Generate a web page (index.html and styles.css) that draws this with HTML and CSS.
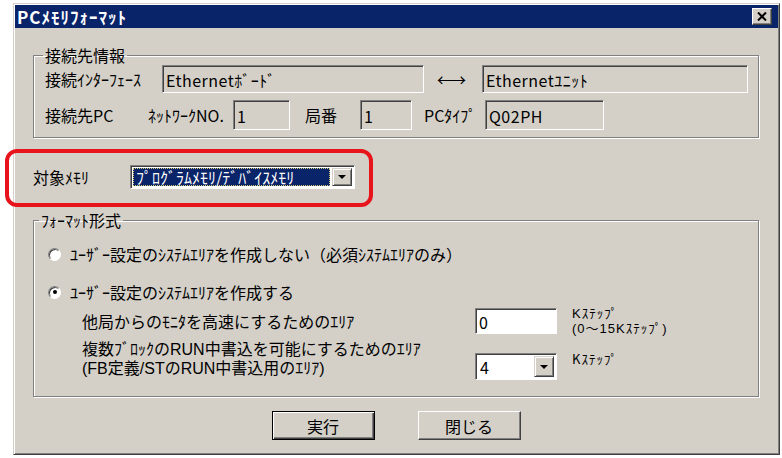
FILE: index.html
```html
<!DOCTYPE html>
<html>
  <head>
    <title>PCメモリフォーマット</title>
    <link rel="stylesheet" href="styles.css">
  </head>
  <body>
    <div class="window">
      <div class="title-bar">
        <span class="title">PCﾒﾓﾘﾌｫｰﾏｯﾄ</span>
        <button class="close-button">
          <svg width="10" height="9" viewBox="0 0 10 9"><path d="M1 0.5 L9 8.5 M9 0.5 L1 8.5" stroke="#000" stroke-width="2"/></svg>
        </button>
      </div>

      <div class="content">
        <fieldset class="group group-connection">
          <legend>接続先情報</legend>
          <div class="row row-interface">
            <span class="label label-interface">接続ｲﾝﾀｰﾌｪｰｽ</span>
            <span class="field field-board">Ethernetﾎﾞｰﾄﾞ</span>
            <span class="arrow">←→</span>
            <span class="field field-unit">Ethernetﾕﾆｯﾄ</span>
          </div>
          <div class="row row-pc">
            <span class="label label-pc">接続先PC</span>
            <span class="label label-network">ﾈｯﾄﾜｰｸNO.</span>
            <span class="field field-network">1</span>
            <span class="label label-station">局番</span>
            <span class="field field-station">1</span>
            <span class="label label-type">PCﾀｲﾌﾟ</span>
            <span class="field field-type">Q02PH</span>
          </div>
        </fieldset>

        <div class="target-row">
          <span class="label label-target">対象ﾒﾓﾘ</span>
          <div class="combo combo-target">
            <span class="combo-value selected">ﾌﾟﾛｸﾞﾗﾑﾒﾓﾘ/ﾃﾞﾊﾞｲｽﾒﾓﾘ</span>
            <span class="combo-button"><span class="down-arrow"></span></span>
          </div>
        </div>

        <fieldset class="group group-format">
          <legend>ﾌｫｰﾏｯﾄ形式</legend>
          <div class="radio-row radio-first">
            <span class="radio"></span>
            <span>ﾕｰｻﾞｰ設定のｼｽﾃﾑｴﾘｱを作成しない（必須ｼｽﾃﾑｴﾘｱのみ）</span>
          </div>
          <div class="radio-row radio-second">
            <span class="radio checked"></span>
            <span>ﾕｰｻﾞｰ設定のｼｽﾃﾑｴﾘｱを作成する</span>
          </div>
          <div class="area-row area-monitor">
            <span class="area-label">他局からのﾓﾆﾀを高速にするためのｴﾘｱ</span>
            <span class="field field-white">0</span>
            <span class="unit">
              <span class="unit-line">Kｽﾃｯﾌﾟ</span>
              <span class="unit-line">(0～15Kｽﾃｯﾌﾟ)</span>
            </span>
          </div>
          <div class="area-row area-run">
            <span class="area-label">
              <span class="label-line">複数ﾌﾞﾛｯｸのRUN中書込を可能にするためのｴﾘｱ</span>
              <span class="label-line">(FB定義/STのRUN中書込用のｴﾘｱ)</span>
            </span>
            <div class="combo combo-steps">
              <span class="combo-value">4</span>
              <span class="combo-button"><span class="down-arrow"></span></span>
            </div>
            <span class="unit unit-single">Kｽﾃｯﾌﾟ</span>
          </div>
        </fieldset>

        <div class="buttons">
          <button class="push-button default">実行</button>
          <button class="push-button">閉じる</button>
        </div>
      </div>
    </div>

    <div class="highlight-box"></div>
  </body>
</html>
```

FILE: styles.css
```css
body {
    margin: 0;
    padding: 3px 2px 0 13px;
    background-color: white;
    font-family: "Noto Sans CJK JP", "Noto Sans", sans-serif;
    font-size: 16px;
    color: black;
}

.window {
    width: 767px;
    height: 452px;
    box-sizing: border-box;
    padding: 1px;
    border: 1px solid;
    border-color: #d4d0c8 #404040 #404040 #d4d0c8;
    box-shadow: inset 1px 1px 0 #ffffff, inset -1px -1px 0 #808080;
    background-color: #d4d0c8;
}

.title-bar {
    height: 23px;
    background-color: #0a246a;
    display: flex;
    align-items: center;
    justify-content: space-between;
    padding: 0 6px 0 2px;
}

.title {
    color: white;
    font-weight: bold;
    font-size: 17px;
    line-height: 20px;
    letter-spacing: 1px;
}

.close-button {
    width: 20px;
    height: 17px;
    padding: 0;
    display: flex;
    align-items: center;
    justify-content: center;
    background-color: #d4d0c8;
    border: 1px solid;
    border-color: #ffffff #404040 #404040 #ffffff;
    box-shadow: inset -1px -1px 0 #808080;
}

.content {
    padding: 17px 19px 0 18px;
}

/* etched group boxes */
.group {
    margin: 0;
    border: 1px solid #808080;
    box-shadow: 1px 1px 0 #ffffff, inset 1px 1px 0 #ffffff;
}

.group legend {
    padding: 0 2px;
    line-height: 20px;
}

.group-connection {
    padding: 0 10px 7px 11px;
}

.group-connection legend {
    margin-left: -2px;
}

.row {
    display: flex;
    align-items: center;
}

.row-interface {
    height: 28px;
}

.row-pc {
    height: 30px;
    margin-top: 7px;
}

.label {
    line-height: 20px;
    white-space: nowrap;
}

.label-interface { width: 117px; }
.label-pc { width: 103px; }
.label-network { width: 85px; }
.label-station { width: 55px; margin-left: 15px; }
.label-type { width: 61px; margin-left: 12px; }
.label-target { width: 97px; }

/* sunken text boxes */
.field {
    box-sizing: border-box;
    height: 100%;
    display: flex;
    align-items: center;
    padding: 2px 3px 0;
    border: 1px solid;
    border-color: #808080 #ffffff #ffffff #808080;
    box-shadow: inset 1px 1px 0 #404040;
    background-color: #d4d0c8;
    white-space: nowrap;
    letter-spacing: 0.5px;
}

.field-board { width: 262px; }
.field-unit { flex: 1; }
.field-network { width: 57px; }
.field-station { width: 52px; }
.field-type { width: 119px; }

.arrow {
    width: 45px;
    margin-left: 13px;
    letter-spacing: -3px;
}

.target-row {
    display: flex;
    align-items: center;
    height: 24px;
    margin-top: 27px;
}

.combo {
    box-sizing: border-box;
    display: flex;
    align-items: center;
    padding: 2px;
    border: 1px solid;
    border-color: #808080 #ffffff #ffffff #808080;
    box-shadow: inset 1px 1px 0 #404040;
    background-color: white;
}

.combo-target {
    width: 225px;
    height: 24px;
}

.combo-value {
    flex: 1;
    height: 100%;
    display: flex;
    align-items: center;
    padding-left: 2px;
    white-space: nowrap;
}

.combo-value.selected {
    box-sizing: border-box;
    margin-right: 2px;
    background-color: #0a246a;
    color: white;
    border: 1px dotted #d8c870;
}

.combo-button {
    box-sizing: border-box;
    width: 20px;
    height: 100%;
    display: flex;
    align-items: center;
    justify-content: center;
    background-color: #d4d0c8;
    border: 1px solid;
    border-color: #d4d0c8 #404040 #404040 #d4d0c8;
    box-shadow: inset 1px 1px 0 #ffffff, inset -1px -1px 0 #808080;
}

.down-arrow {
    width: 0;
    height: 0;
    border-left: 4px solid transparent;
    border-right: 4px solid transparent;
    border-top: 4px solid black;
}

.group-format {
    margin-top: 21px;
    padding: 0 10px 16px 14px;
}

.group-format legend {
    margin-left: -9px;
}

.radio-row {
    display: flex;
    align-items: center;
    gap: 9px;
    height: 20px;
    white-space: nowrap;
}

.radio-first { margin-top: 14px; }
.radio-second { margin-top: 18px; }

.radio {
    box-sizing: border-box;
    width: 13px;
    height: 13px;
    border-radius: 50%;
    border: 1px solid;
    border-color: #808080 #ffffff #ffffff #808080;
    box-shadow: inset 1px 1px 0 #404040;
    background-color: white;
    display: flex;
    align-items: center;
    justify-content: center;
}

.radio.checked::after {
    content: "";
    width: 4px;
    height: 4px;
    border-radius: 50%;
    background-color: black;
}

.area-row {
    display: flex;
    margin-left: 34px;
}

.area-monitor {
    align-items: center;
    height: 26px;
    margin-top: 6px;
}

.area-run {
    align-items: flex-end;
    margin-top: 6px;
}

.area-label {
    width: 393px;
    display: flex;
    flex-direction: column;
    white-space: nowrap;
}

.area-run .area-label {
    margin-bottom: 2px;
}

/* tight two-line labels: Latin primary font keeps the line boxes compact */
.label-line {
    height: 19px;
    line-height: 19px;
    font-family: "Liberation Sans", "Noto Sans CJK JP", sans-serif;
}

.field-white {
    width: 82px;
    background-color: white;
}

.combo-steps {
    width: 82px;
    height: 27px;
}

.unit {
    margin-left: 15px;
    display: flex;
    flex-direction: column;
    font-size: 13px;
    letter-spacing: 1px;
    white-space: nowrap;
}

.unit-line {
    height: 15px;
    line-height: 15px;
    font-family: "Liberation Sans", "Noto Sans CJK JP", sans-serif;
}

.unit-single {
    align-self: center;
    line-height: 15px;
    margin-top: -4px;
}

.buttons {
    display: flex;
    justify-content: center;
    gap: 43px;
    margin-top: 14px;
}

.push-button {
    box-sizing: border-box;
    width: 103px;
    height: 29px;
    font-family: inherit;
    font-size: 16px;
    background-color: #d4d0c8;
    border: 1px solid;
    border-color: #ffffff #404040 #404040 #ffffff;
    box-shadow: inset -1px -1px 0 #808080;
}

.push-button.default {
    border-color: #000000;
    box-shadow: inset 1px 1px 0 #ffffff, inset -1px -1px 0 #404040, inset -2px -2px 0 #808080;
}

.highlight-box {
    position: absolute;
    left: 5px;
    top: 149px;
    width: 360px;
    height: 50px;
    border: 4px solid #e8141c;
    border-radius: 12px;
}
```
